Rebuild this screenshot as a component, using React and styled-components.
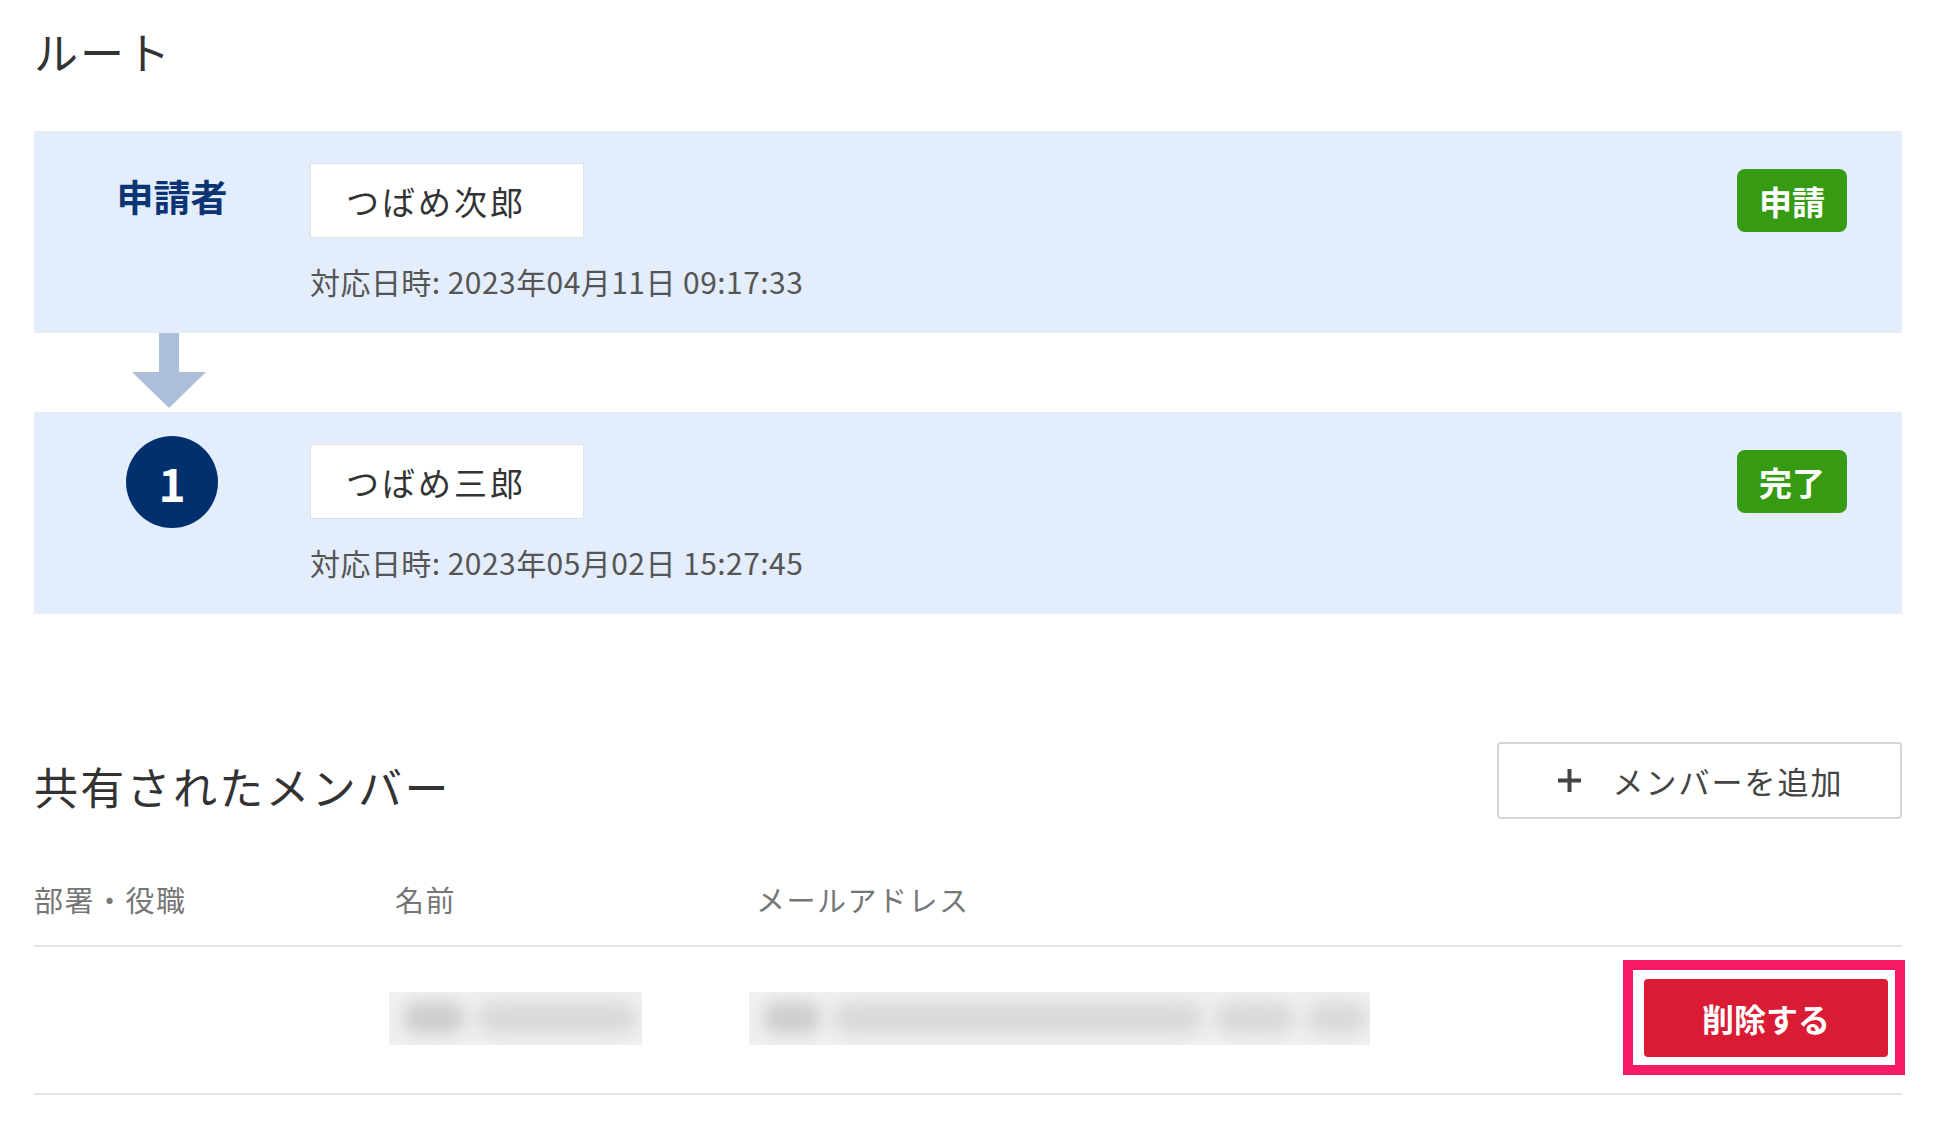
import React from 'react';
import styled, { createGlobalStyle } from 'styled-components';

const GlobalStyle = createGlobalStyle`
  html, body {
    margin: 0;
    padding: 0;
    background: #fff;
  }

  body {
    font-family: "Noto Sans CJK JP", "Noto Sans", sans-serif;
    color: #333;
  }
`;

const steps = [
  { id: 'applicant', label: '申請者', name: 'つばめ次郎', date: '2023年04月11日 09:17:33', status: '申請' },
  { id: 'step1', order: 1, name: 'つばめ三郎', date: '2023年05月02日 15:27:45', status: '完了' },
];

const nameBlobs = [
  { w: 62, dark: true },
  { w: 160 },
];

const mailBlobs = [
  { w: 58, dark: true },
  { w: 370 },
  { w: 80 },
  { w: 60 },
];

function DownArrow() {
  return (
    <svg width="74" height="75" viewBox="0 0 74 75">
      <rect x="27" y="0" width="20" height="40" fill="#adbfd8" />
      <polygon points="0,39 74,39 37,75" fill="#adbfd8" />
    </svg>
  );
}

function PlusIcon() {
  return (
    <svg width="27" height="27" viewBox="0 0 27 27">
      <path d="M13.5 2v23M2 13.5h23" stroke="#444" strokeWidth="4" />
    </svg>
  );
}

function Blur({ width, blobs }) {
  return (
    <BlurBar $width={width}>
      {blobs.map((b, i) => (
        <Blob key={i} $width={b.w} $dark={b.dark} />
      ))}
    </BlurBar>
  );
}

function App() {
  return (
    <Page>
      <GlobalStyle />
      <SectionTitle>ルート</SectionTitle>

      <RouteList>
        {steps.map((step, i) => (
          <React.Fragment key={step.id}>
            {i > 0 && (
              <ArrowRow>
                <DownArrow />
              </ArrowRow>
            )}
            <Step>
              <Marker>
                {step.label ? <StepLabel>{step.label}</StepLabel> : <StepNumber>{step.order}</StepNumber>}
              </Marker>
              <NameBox>{step.name}</NameBox>
              <Badge>{step.status}</Badge>
              <DateText>対応日時: {step.date}</DateText>
            </Step>
          </React.Fragment>
        ))}
      </RouteList>

      <MembersHeader>
        <MembersTitle>共有されたメンバー</MembersTitle>
        <AddButton>
          <PlusIcon />
          <span>メンバーを追加</span>
        </AddButton>
      </MembersHeader>

      <HeaderRow>
        <HeadCell>部署・役職</HeadCell>
        <HeadCell $indent={6}>名前</HeadCell>
        <HeadCell $indent={7}>メールアドレス</HeadCell>
        <HeadCell />
      </HeaderRow>
      <BodyRow>
        <div />
        <Blur width={253} blobs={nameBlobs} />
        <Blur width={621} blobs={mailBlobs} />
        <ActionCell>
          <DeleteButton>削除する</DeleteButton>
        </ActionCell>
      </BodyRow>
    </Page>
  );
}

export default App;

const Page = styled.div`
  padding: 21px 38px 40px 34px;
`;

const SectionTitle = styled.h2`
  margin: 0;
  font-size: 44px;
  line-height: 60px;
  font-weight: 400;
  letter-spacing: 2px;
  color: #333;
`;

const RouteList = styled.div`
  margin-top: 50px;
`;

const Step = styled.div`
  display: grid;
  grid-template-columns: 276px 1fr auto;
  grid-template-rows: 75px auto;
  row-gap: 23px;
  align-items: center;
  padding: 32px 55px 32px 0;
  background: #e3edfc;
`;

const Marker = styled.div`
  display: flex;
  justify-content: center;
  align-items: center;
  height: 75px;
`;

const StepLabel = styled.span`
  margin-bottom: 10px;
  font-size: 37px;
  font-weight: 700;
  color: #0b3472;
`;

const StepNumber = styled.span`
  display: flex;
  align-items: center;
  justify-content: center;
  width: 92px;
  height: 92px;
  flex-shrink: 0;
  border-radius: 50%;
  background: #00306e;
  color: #fff;
  font-size: 46px;
  font-weight: 700;
  line-height: 1;
`;

const NameBox = styled.div`
  display: flex;
  align-items: center;
  box-sizing: border-box;
  width: 274px;
  height: 75px;
  padding-left: 35px;
  background: #fff;
  border: 1px solid #dde3ea;
  font-size: 33px;
  letter-spacing: 3px;
  color: #333;
`;

const Badge = styled.span`
  display: flex;
  align-items: center;
  justify-content: center;
  width: 110px;
  height: 63px;
  border-radius: 8px;
  background: #369b12;
  color: #fff;
  font-size: 33px;
  font-weight: 700;
`;

const DateText = styled.div`
  grid-column: 2 / span 2;
  font-size: 30px;
  line-height: 40px;
  letter-spacing: 0.45px;
  color: #555;
`;

const ArrowRow = styled.div`
  display: flex;
  justify-content: center;
  width: 270px;
  height: 79px;
`;

const MembersHeader = styled.div`
  display: flex;
  justify-content: space-between;
  align-items: center;
  margin-top: 128px;
`;

const MembersTitle = styled.h2`
  margin: 10px 0 0;
  font-size: 44px;
  line-height: 60px;
  font-weight: 400;
  letter-spacing: 2.3px;
  color: #333;
`;

const AddButton = styled.button`
  display: flex;
  align-items: center;
  justify-content: center;
  gap: 30px;
  box-sizing: border-box;
  width: 405px;
  height: 77px;
  background: #fff;
  border: 2px solid #d6d6d6;
  border-radius: 4px;
  font-family: inherit;
  font-size: 31px;
  letter-spacing: 2px;
  color: #444;
  cursor: pointer;
`;

const gridColumns = '355px 360px 1fr auto';

const HeaderRow = styled.div`
  display: grid;
  grid-template-columns: ${gridColumns};
  padding: 60px 0 26px;
  border-bottom: 2px solid #e4e4e4;
`;

const HeadCell = styled.div`
  padding-left: ${({ $indent }) => $indent || 0}px;
  font-size: 29px;
  line-height: 40px;
  letter-spacing: 1.5px;
  color: #777;
`;

const BodyRow = styled.div`
  display: grid;
  grid-template-columns: ${gridColumns};
  align-items: center;
  padding: 32px 0 36px;
  border-bottom: 2px solid #e4e4e4;
`;

const BlurBar = styled.div`
  display: flex;
  align-items: center;
  gap: 12px;
  box-sizing: border-box;
  width: ${({ $width }) => $width}px;
  height: 53px;
  padding: 0 14px;
  background: #f0f0f0;
  overflow: hidden;
`;

const Blob = styled.span`
  flex-shrink: 0;
  width: ${({ $width }) => $width}px;
  height: 32px;
  border-radius: 16px;
  background: ${({ $dark }) => ($dark ? '#cdcdcd' : '#d9d9d9')};
  filter: blur(8px);
`;

const ActionCell = styled.div`
  padding-right: 14px;
`;

const DeleteButton = styled.button`
  position: relative;
  display: block;
  width: 244px;
  height: 78px;
  border: none;
  border-radius: 4px;
  background: #d91b34;
  color: #fff;
  font-family: inherit;
  font-size: 32px;
  font-weight: 700;
  cursor: pointer;

  &::after {
    content: '';
    position: absolute;
    inset: -19px -17px -18px -21px;
    border: 10px solid #f71b66;
    pointer-events: none;
  }
`;
